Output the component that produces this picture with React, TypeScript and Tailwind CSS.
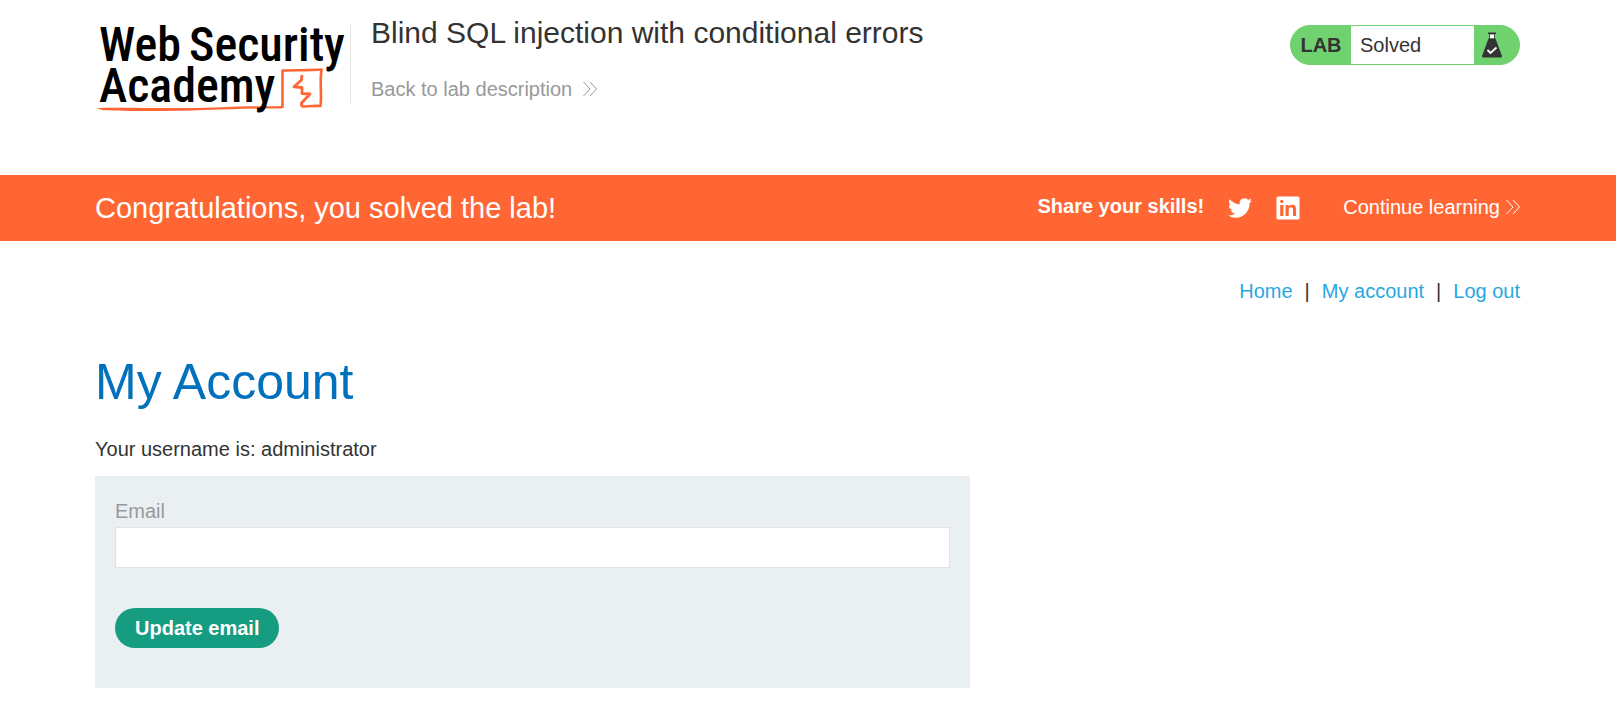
import React from "react";

function Chevrons({ className }: { className: string }) {
  return (
    <svg viewBox="0 0 14 16" className={className} fill="none" stroke="currentColor" strokeWidth="1" aria-hidden="true">
      <path d="M0.5 1 L7 8 L0.5 15 M7 1 L13.5 8 L7 15" />
    </svg>
  );
}

function Logo() {
  return (
    <svg
      viewBox="0 -10 255 110"
      className="h-[110px] w-[255px] shrink-0"
      role="img"
      aria-label="Web Security Academy"
    >
      <path d="M1 88 C20 87 80 89 120 87.500 C150 86 170 86.500 187 86 L187 88.500 C165 88 140 89.500 110 90 C70 91.500 30 91 8 90.200 Z" fill="#ff6633" />
      <path
        d="M187.500 88 L187.500 50.500 C200 50 214 50.500 226.500 49.500 C224.500 62 227 74 225.500 86 C218 85.500 212 86.500 206.500 86.500"
        fill="none"
        stroke="#ff6633"
        strokeWidth="2.600"
        strokeLinejoin="round"
      />
      <path
        d="M207 55 L206.500 60 L199 66.800 L207 67.500 L207 73.500 L215 74 L206.500 83 L206.500 86.500"
        fill="none"
        stroke="#ff6633"
        strokeWidth="2.800"
        strokeLinejoin="round"
      />
      <g fill="#000" fontSize="48" fontWeight="500" fontFamily="'Roboto Condensed', 'Roboto', sans-serif">
        <text x="4" y="41">Web</text>
        <text x="94" y="41">Security</text>
        <text x="4" y="82">Academy</text>
      </g>
    </svg>
  );
}

function Flask() {
  return (
    <svg viewBox="0 0 20 26" className="h-[26px] w-5" aria-hidden="true">
      <path d="M6 0.500h8v1.500h-8z" fill="#333332" />
      <path d="M7.500 2h5v5h-5z" fill="#fff" stroke="#333332" strokeWidth="0.800" />
      <path d="M6.500 6.500h7L19.800 23.500c.4 1.200-.2 2-1.300 2h-17C.4 25.500-.2 24.700.2 23.500z" fill="#333332" />
      <path d="M5.500 18l3 3 6-5.500" fill="none" stroke="#fff" strokeWidth="1.800" />
    </svg>
  );
}

function TwitterIcon() {
  return (
    <svg viewBox="0 0 24 24" className="size-6" fill="currentColor" aria-hidden="true">
      <path d="M23.950 4.570a10 10 0 01-2.820.770 4.960 4.960 0 002.160-2.720c-.950.550-2 .950-3.130 1.180a4.920 4.920 0 00-8.380 4.480C7.690 8.090 4.070 6.130 1.640 3.160a4.820 4.820 0 00-.670 2.480c0 1.710.870 3.210 2.190 4.100a4.900 4.900 0 01-2.230-.620v.060a4.920 4.920 0 003.950 4.830 5 5 0 01-2.210.080 4.940 4.940 0 004.600 3.420A9.870 9.870 0 010 19.540a13.990 13.990 0 007.550 2.210c9.050 0 14-7.500 14-13.990 0-.210 0-.420-.020-.630a9.940 9.940 0 002.460-2.550z" />
    </svg>
  );
}

function LinkedInIcon() {
  return (
    <svg viewBox="0 0 24 24" className="size-6" aria-hidden="true">
      <rect x="0.500" y="0.500" width="23" height="23" rx="1.500" fill="#fff" />
      <g fill="#ff6633">
        <circle cx="5.800" cy="5.500" r="1.700" />
        <path d="M4.200 9h3.200v11H4.200z" />
        <path d="M9.600 9h3v1.500c.6-1.100 1.900-1.800 3.400-1.800 3.200 0 4.100 1.900 4.100 4.900V20h-3.100v-5.600c0-1.700-.2-3.200-2-3.200s-2.300 1.500-2.300 3.100V20H9.600z" />
      </g>
    </svg>
  );
}

export default function App() {
  return (
    <div className="min-h-screen bg-white font-['Liberation_Sans',Arial,sans-serif] text-xl leading-6 text-[#333332]">
      <header className="flex items-start justify-between pt-[10px] pr-24 pb-[55px] pl-[95px]">
        <div className="flex items-start">
          <a href="#academy">
            <Logo />
          </a>
          <div className="mt-[15px] h-[78px] border-l border-[#e2e2e2]" />
          <div className="pt-[3px] pl-5">
            <h1 className="text-[30px] leading-[40px]">Blind SQL injection with conditional errors</h1>
            <a href="#description" className="mt-6 flex items-center gap-[11px] text-[#999]">
              Back to lab description
              <Chevrons className="h-4 w-[14px]" />
            </a>
          </div>
        </div>
        <div className="mt-[15px] flex h-10 w-[230px] shrink-0 items-stretch overflow-hidden rounded-full border border-[#70d26e] bg-[#70d26e]">
          <span className="flex w-[60px] items-center justify-center font-bold">LAB</span>
          <span className="flex flex-1 items-center bg-white pl-[9px]">Solved</span>
          <span className="flex w-[45px] items-center pl-2">
            <Flask />
          </span>
        </div>
      </header>

      <section className="flex items-center justify-between bg-[#ff6633] py-[13px] pr-24 pl-[95px] text-white">
        <h2 className="text-[29px] leading-10">Congratulations, you solved the lab!</h2>
        <div className="flex items-center">
          <span className="pb-1 font-bold">Share your skills!</span>
          <a href="#twitter" aria-label="Share on Twitter" className="ml-6">
            <TwitterIcon />
          </a>
          <a href="#linkedin" aria-label="Share on LinkedIn" className="ml-6">
            <LinkedInIcon />
          </a>
          <a href="#learn" className="ml-[43px] flex items-center gap-[6px] pb-[2px]">
            Continue learning
            <Chevrons className="h-4 w-[14px]" />
          </a>
        </div>
      </section>

      <main className="pt-[38px] pr-24 pl-[95px]">
        <nav className="flex justify-end gap-3 text-[#29a7e1]">
          <a href="#home">Home</a>
          <span className="text-[#333332]">|</span>
          <a href="#account">My account</a>
          <span className="text-[#333332]">|</span>
          <a href="#logout">Log out</a>
        </nav>
        <h1 className="mt-[49px] text-[50px] leading-[60px] text-[#0071bd]">My Account</h1>
        <p className="mt-[25px]">Your username is: administrator</p>
        <form className="mt-[15px] max-w-[875px] bg-[#eaeff2] px-5 pt-[23px] pb-10" onSubmit={(e) => e.preventDefault()}>
          <label htmlFor="email" className="block text-[#999]">
            Email
          </label>
          <input
            id="email"
            type="email"
            className="mt-1 block h-[41px] w-full border border-[#e2e2e2] bg-white px-2 outline-none"
          />
          <button type="submit" className="mt-10 block rounded-full bg-[#169c80] px-5 py-2 font-bold text-white">
            Update email
          </button>
        </form>
      </main>
    </div>
  );
}
